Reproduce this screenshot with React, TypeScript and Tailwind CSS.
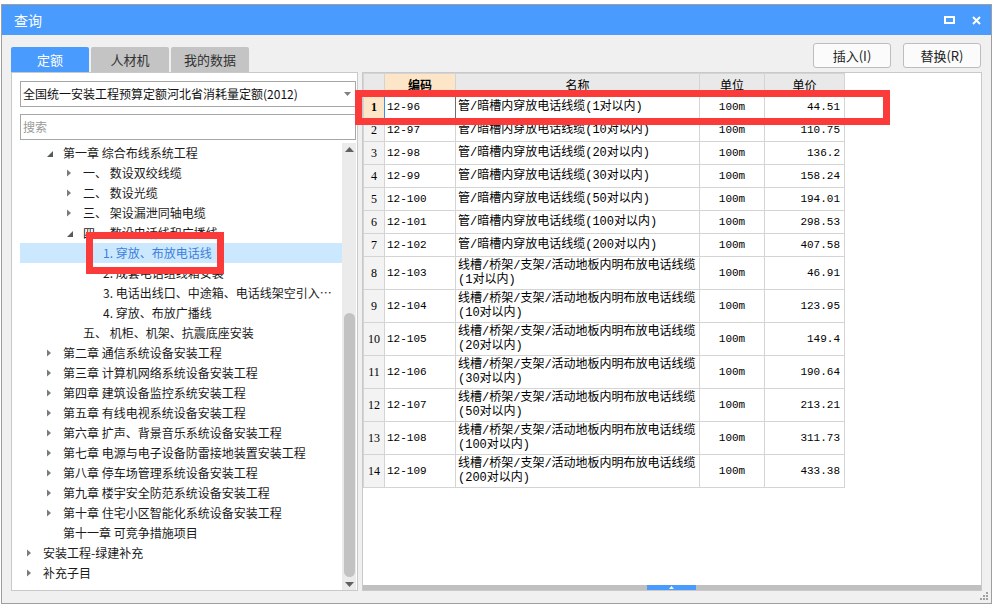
import React from 'react'

type TreeNode = { level: 0 | 1 | 2 | 3; text: string; arrow?: 'open' | 'closed'; selected?: boolean }

const tree: TreeNode[] = [
  { level: 1, text: '第一章 综合布线系统工程', arrow: 'open' },
  { level: 2, text: '一、 数设双绞线缆', arrow: 'closed' },
  { level: 2, text: '二、 数设光缆', arrow: 'closed' },
  { level: 2, text: '三、 架设漏泄同轴电缆', arrow: 'closed' },
  { level: 2, text: '四、 数设电话线和广播线', arrow: 'open' },
  { level: 3, text: '1. 穿放、布放电话线', selected: true },
  { level: 3, text: '2. 成套电话组线箱安装' },
  { level: 3, text: '3. 电话出线口、中途箱、电话线架空引入装置' },
  { level: 3, text: '4. 穿放、布放广播线' },
  { level: 2, text: '五、 机柜、机架、抗震底座安装' },
  { level: 1, text: '第二章 通信系统设备安装工程', arrow: 'closed' },
  { level: 1, text: '第三章 计算机网络系统设备安装工程', arrow: 'closed' },
  { level: 1, text: '第四章 建筑设备监控系统安装工程', arrow: 'closed' },
  { level: 1, text: '第五章 有线电视系统设备安装工程', arrow: 'closed' },
  { level: 1, text: '第六章 扩声、背景音乐系统设备安装工程', arrow: 'closed' },
  { level: 1, text: '第七章 电源与电子设备防雷接地装置安装工程', arrow: 'closed' },
  { level: 1, text: '第八章 停车场管理系统设备安装工程', arrow: 'closed' },
  { level: 1, text: '第九章 楼宇安全防范系统设备安装工程', arrow: 'closed' },
  { level: 1, text: '第十章 住宅小区智能化系统设备安装工程', arrow: 'closed' },
  { level: 1, text: '第十一章 可竞争措施项目' },
  { level: 0, text: '安装工程-绿建补充', arrow: 'closed' },
  { level: 0, text: '补充子目', arrow: 'closed' },
]

const indent = ['pl-[8px]', 'pl-[28px]', 'pl-[48px]', 'pl-[68px]']

type Row = { code: string; name: string; name2?: string; price: string }

const rows: Row[] = [
  { code: '12-96', name: '管/暗槽内穿放电话线缆(1对以内)', price: '44.51' },
  { code: '12-97', name: '管/暗槽内穿放电话线缆(10对以内)', price: '110.75' },
  { code: '12-98', name: '管/暗槽内穿放电话线缆(20对以内)', price: '136.2' },
  { code: '12-99', name: '管/暗槽内穿放电话线缆(30对以内)', price: '158.24' },
  { code: '12-100', name: '管/暗槽内穿放电话线缆(50对以内)', price: '194.01' },
  { code: '12-101', name: '管/暗槽内穿放电话线缆(100对以内)', price: '298.53' },
  { code: '12-102', name: '管/暗槽内穿放电话线缆(200对以内)', price: '407.58' },
  { code: '12-103', name: '线槽/桥架/支架/活动地板内明布放电话线缆', name2: '(1对以内)', price: '46.91' },
  { code: '12-104', name: '线槽/桥架/支架/活动地板内明布放电话线缆', name2: '(10对以内)', price: '123.95' },
  { code: '12-105', name: '线槽/桥架/支架/活动地板内明布放电话线缆', name2: '(20对以内)', price: '149.4' },
  { code: '12-106', name: '线槽/桥架/支架/活动地板内明布放电话线缆', name2: '(30对以内)', price: '190.64' },
  { code: '12-107', name: '线槽/桥架/支架/活动地板内明布放电话线缆', name2: '(50对以内)', price: '213.21' },
  { code: '12-108', name: '线槽/桥架/支架/活动地板内明布放电话线缆', name2: '(100对以内)', price: '311.73' },
  { code: '12-109', name: '线槽/桥架/支架/活动地板内明布放电话线缆', name2: '(200对以内)', price: '433.38' },
]

const mono = "font-['Liberation_Mono','Noto_Sans_CJK_SC',monospace]"

function Arrow({ kind }: { kind?: 'open' | 'closed' }) {
  if (kind === 'closed')
    return <svg width="5" height="8" className="-ml-[1px]"><polygon points="0,0.5 4,4 0,7.5" fill="#7a7a7a" /></svg>
  if (kind === 'open')
    return <svg width="7" height="7" className="-ml-[1px] mt-[3px]"><polygon points="6,0 6,6 0,6" fill="#595959" /></svg>
  return null
}

function LeftPanel() {
  return (
    <div className="w-[347px] h-full border border-[#c9c9c9] bg-white flex flex-col">
      <div className="ml-[8px] mt-[8px] w-[336px] h-[26px] border border-[#a6a6a6] flex items-center justify-between pl-[2px] pr-[4px] text-[12px] text-[#111]">
        <span>全国统一安装工程预算定额河北省消耗量定额(2012)</span>
        <svg width="7" height="4"><polygon points="0,0 7,0 3.5,4" fill="#808080" /></svg>
      </div>
      <div className="ml-[8px] mt-[7px] w-[336px] h-[26px] border border-[#a6a6a6] flex items-center pl-[2px] text-[12px] text-[#9a9a9a]">
        搜索
      </div>
      <div className="mt-[3px] flex-1 flex pl-[8px]">
        <div className="w-[322px] text-[12px] text-[#1a1a1a]">
          {tree.map((n, i) => (
            <div key={i} className={`h-[20px] flex items-center ${indent[n.level]} ${n.selected ? 'bg-[#cce8ff] text-[#3a7fdc]' : ''}`}>
              <span className="w-[15px] shrink-0 flex items-center"><Arrow kind={n.arrow} /></span>
              <span className="truncate pr-[4px] leading-[20px]">{n.text}</span>
            </div>
          ))}
        </div>
        <div className="w-[14px] bg-[#ebebeb] flex flex-col items-center">
          <div className="h-[12px] flex items-center">
            <svg width="9" height="5"><polygon points="0,5 9,5 4.5,0" fill="#606060" /></svg>
          </div>
          <div className="flex-1 w-full flex flex-col items-center">
            <div className="mt-[158px] w-[11px] h-[264px] rounded-full bg-[#c2c2c2]" />
          </div>
          <div className="h-[12px] flex items-center">
            <svg width="9" height="5"><polygon points="0,0 9,0 4.5,5" fill="#606060" /></svg>
          </div>
        </div>
      </div>
    </div>
  )
}

function RightPanel() {
  const line = 'border-r border-b border-[#d4d4d4]'
  return (
    <div className="w-[620px] h-full border border-[#c9c9c9] bg-white flex flex-col">
      <div className="w-[482px] border-l border-t border-[#d4d4d4] text-[12px] text-black">
        <div className="flex h-[22px]">
          <div className={`w-[21px] bg-[#e9e9e9] ${line}`} />
          <div className={`w-[71px] bg-[#fde6c8] font-bold flex items-center justify-center ${line}`}>编码</div>
          <div className={`w-[244px] bg-[#e9e9e9] flex items-center justify-center ${line}`}>名称</div>
          <div className={`w-[65px] bg-[#e9e9e9] flex items-center justify-center ${line}`}>单位</div>
          <div className={`w-[80px] bg-[#e9e9e9] flex items-center justify-center ${line}`}>单价</div>
        </div>
        {rows.map((r, i) => {
          const first = i === 0
          return (
            <div key={r.code} className={`flex ${r.name2 ? 'h-[33px]' : 'h-[23px]'}`}>
              <div className={`w-[21px] flex items-center justify-center font-['Liberation_Serif',serif] ${line} ${first ? 'bg-[#fde6c8] font-bold border-r-[#3b8ff0]' : 'bg-[#f3f3f3]'}`}>{i + 1}</div>
              <div className={`w-[71px] flex items-center pl-[2px] text-[11px] font-['Liberation_Mono',monospace] ${line} ${first ? 'border-r-[#6e6e6e]' : ''}`}>{r.code}</div>
              <div className={`w-[244px] flex flex-col justify-center pl-[2px] leading-[14px] whitespace-nowrap ${mono} ${line}`}>
                <span>{r.name}</span>
                {r.name2 && <span>{r.name2}</span>}
              </div>
              <div className={`w-[65px] flex items-center justify-center text-[11px] font-['Liberation_Mono',monospace] ${line}`}>100m</div>
              <div className={`w-[80px] flex items-center justify-end pr-[4px] text-[11px] font-['Liberation_Mono',monospace] ${line}`}>{r.price}</div>
            </div>
          )
        })}
      </div>
      <div className="flex-1" />
      <div className="h-[5px] bg-[#c0c0c0] flex">
        <div className="ml-[284px] w-[49px] h-full bg-[#4a9bfe] flex items-center justify-center">
          <svg width="5" height="3"><polygon points="0,3 5,3 2.5,0" fill="#fff" /></svg>
        </div>
      </div>
    </div>
  )
}

export default function App() {
  return (
    <div className="relative w-[994px] h-[608px] overflow-hidden bg-white font-['Noto_Sans_CJK_SC',sans-serif] text-[#1f1f1f]">
      <div className="ml-[1px] mt-[4px] w-[991px] h-[600px] border border-[#9e9e9e] bg-[#f0f0f0] flex flex-col">
        <div className="h-[30px] bg-[#4a9bfe] flex items-center justify-between pl-[12px] pr-[10px]">
          <span className="text-[14px] text-white">查询</span>
          <div className="flex items-center gap-[17px]">
            <svg width="11" height="8"><rect x="1" y="1" width="9" height="6" fill="none" stroke="#fff" strokeWidth="2" /></svg>
            <svg width="9" height="9"><path d="M1 1 L8 8 M8 1 L1 8" stroke="#fff" strokeWidth="2" /></svg>
          </div>
        </div>
        <div className="h-[37px] flex justify-between">
          <div className="self-end ml-[9px] flex gap-[2px] text-[13px]">
            <div className="w-[78px] h-[25px] rounded-t-[2px] bg-[#4a9bfe] text-white flex items-center justify-center">定额</div>
            <div className="w-[78px] h-[25px] rounded-t-[2px] bg-[#c4c4c4] text-[#333] flex items-center justify-center">人材机</div>
            <div className="w-[78px] h-[25px] rounded-t-[2px] bg-[#c4c4c4] text-[#333] flex items-center justify-center">我的数据</div>
          </div>
          <div className="mt-[8px] mr-[10px] flex gap-[12px] text-[13px] text-[#222]">
            <button className="w-[78px] h-[25px] rounded-[3px] border border-[#bdbdbd] bg-[#fbfbfb]">插入(I)</button>
            <button className="w-[78px] h-[25px] rounded-[3px] border border-[#bdbdbd] bg-[#fbfbfb]">替换(R)</button>
          </div>
        </div>
        <div className="h-[519px] flex pl-[9px] gap-[4px]">
          <LeftPanel />
          <RightPanel />
        </div>
        <div className="flex-1 flex justify-end items-start pr-[3px] pt-[1px]">
          <svg width="8" height="8">
            {[[6, 0], [3, 3], [6, 3], [0, 6], [3, 6], [6, 6]].map(([x, y]) => (
              <rect key={`${x}-${y}`} x={x} y={y} width="2" height="2" fill="#a0a0a0" />
            ))}
          </svg>
        </div>
      </div>
      <div className="absolute left-[355px] top-[90px] w-[535px] h-[35px] border-[7px] border-[#fb3a3a]" />
      <div className="absolute left-[86px] top-[232px] w-[138px] h-[42px] border-[7px] border-[#fb3a3a]" />
    </div>
  )
}
